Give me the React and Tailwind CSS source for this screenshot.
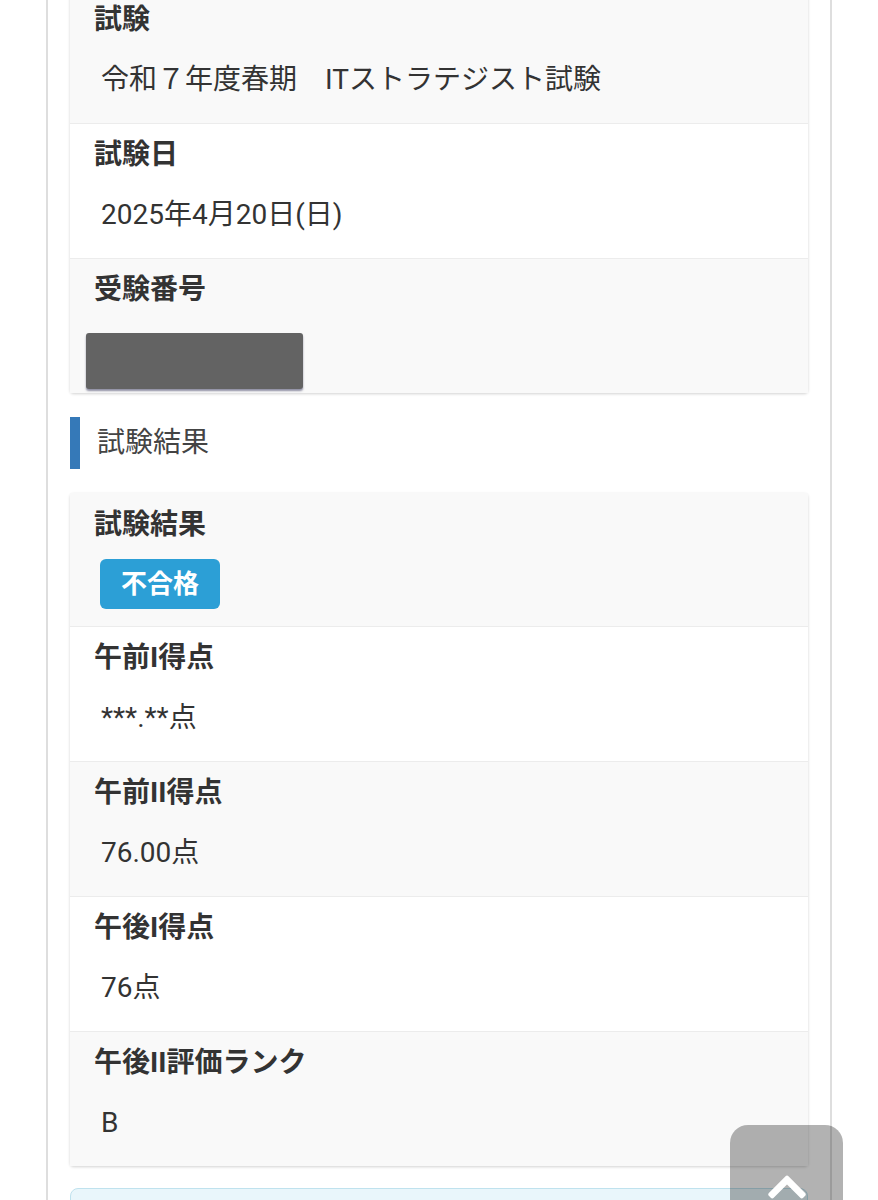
import { FaChevronUp } from "react-icons/fa";

const FONT = "font-['Roboto','Noto_Sans_CJK_JP',sans-serif]";

const examRows = [
  { label: "試験", value: "令和７年度春期　ITストラテジスト試験" },
  { label: "試験日", value: "2025年4月20日(日)" },
];

const scoreRows = [
  { label: "午前I得点", value: "***.**点" },
  { label: "午前II得点", value: "76.00点" },
  { label: "午後I得点", value: "76点" },
  { label: "午後II評価ランク", value: "B" },
];

function Row({ label, children, shade, first, bottom = "pb-0" }) {
  return (
    <div
      className={`${shade ? "bg-[#f9f9f9]" : "bg-white"} ${first ? "" : "border-t border-[#ececec]"} px-[24px] ${bottom}`}
    >
      <p className="pt-[13px] text-[28px] leading-[36px] font-bold text-[#333]">{label}</p>
      {children}
    </div>
  );
}

function Value({ children }) {
  return <p className="ml-[7px] mt-[24px] pb-[25px] text-[28px] leading-[36px] text-[#333]">{children}</p>;
}

export default function App() {
  return (
    <div className={`${FONT} relative h-[1200px] overflow-hidden bg-white`}>
      <div className="mx-[46px] flow-root h-full border-x-2 border-[#dedede] px-[22px]">
        {/* exam info */}
        <div className="-mt-[11px] rounded-sm shadow-[0_1px_3px_rgba(0,0,0,0.18)]">
          {examRows.map((r, i) => (
            <Row key={r.label} label={r.label} shade={i % 2 === 0} first={i === 0}>
              <Value>{r.value}</Value>
            </Row>
          ))}
          <Row label="受験番号" shade bottom="pb-[4px]">
            <div className="mt-[25px] h-[56px] w-[217px] -ml-[8px] rounded-[3px] bg-[#636363] shadow-[0_2px_2px_rgba(40,40,80,0.5)]" />
          </Row>
        </div>

        {/* section heading */}
        <div className="my-[24px] flex items-center">
          <div className="h-[52px] w-[10px] bg-[#3579b8]" />
          <h2 className="ml-[17px] text-[28px] leading-[36px] text-[#444]">試験結果</h2>
        </div>

        {/* results */}
        <div className="rounded-sm shadow-[0_1px_3px_rgba(0,0,0,0.18)]">
          <div className="bg-[#f9f9f9] px-[24px] pb-[17px]">
            <p className="pt-[14px] text-[28px] leading-[36px] font-bold text-[#333]">試験結果</p>
            <div className="ml-[6px] mt-[16px] inline-flex h-[50px] items-center rounded-[6px] bg-[#2c9fd6] px-[21px] text-[26px] font-bold text-white">
              不合格
            </div>
          </div>
          {scoreRows.map((r, i) => (
            <Row key={r.label} label={r.label} shade={i % 2 === 1}>
              <Value>{r.value}</Value>
            </Row>
          ))}
        </div>

        <div className="mt-[22px] h-[60px] rounded-[8px] border border-[#bfe2ee] bg-[#e9f6fb]" />
      </div>

      {/* back to top */}
      <button className="absolute left-[730px] top-[1125px] flex h-[113px] w-[113px] justify-center rounded-[18px] bg-black/30 pt-[40px] text-white">
        <FaChevronUp className="h-[44px] w-[44px]" />
      </button>
    </div>
  );
}
